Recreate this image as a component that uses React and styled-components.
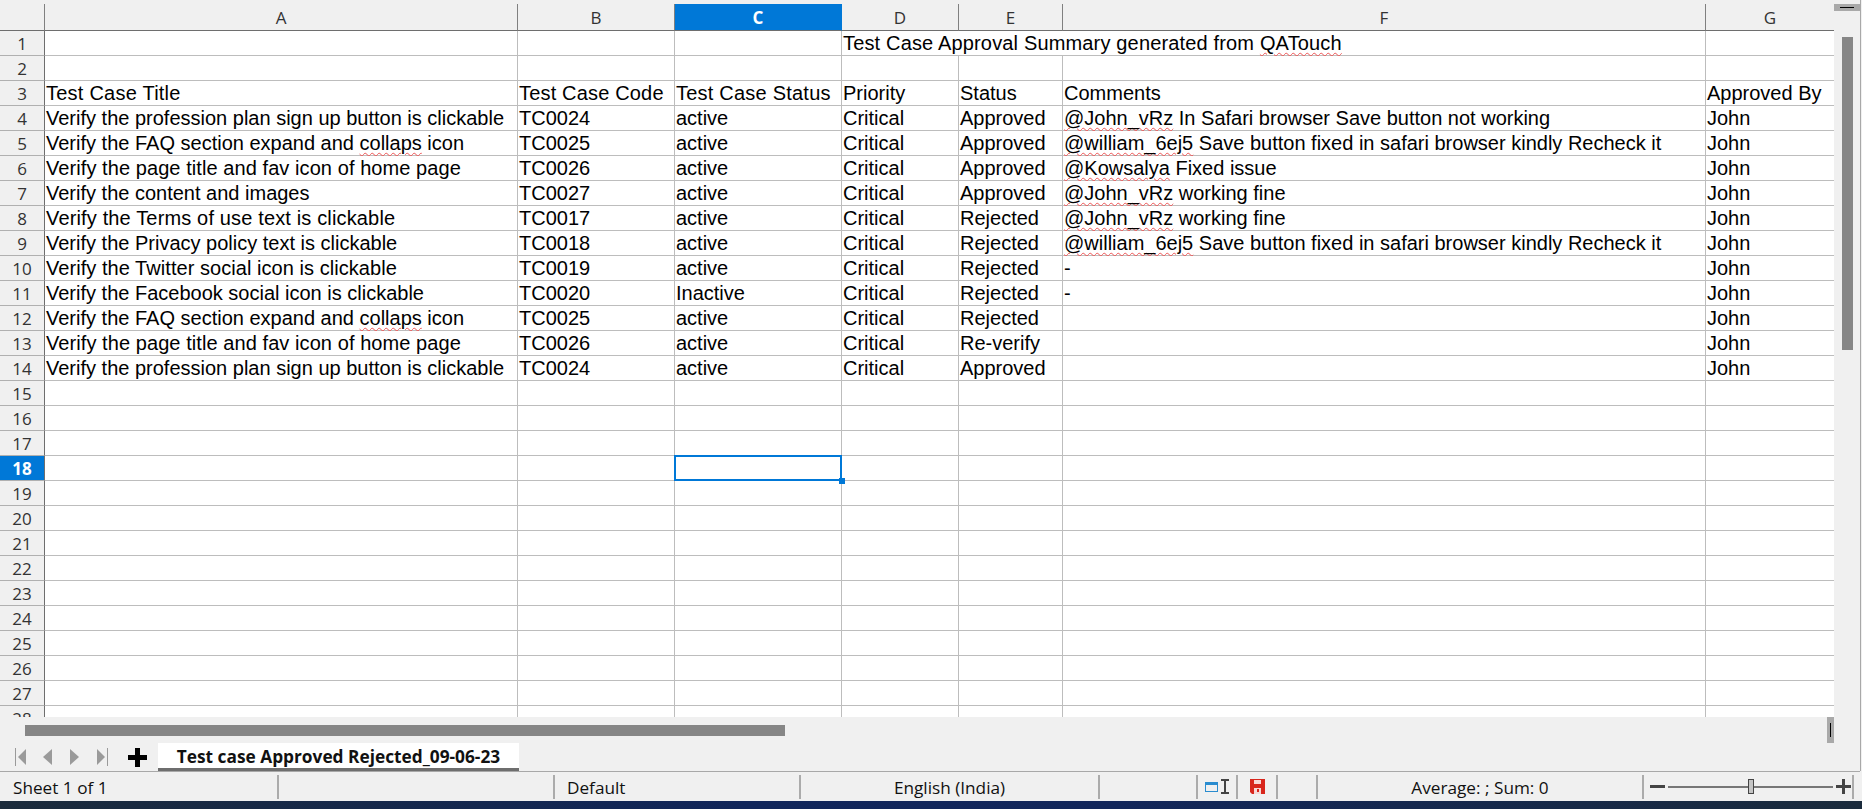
import React from 'react'
import styled, { createGlobalStyle } from 'styled-components'

const GlobalStyle = createGlobalStyle`
    html, body {
        margin: 0;
        padding: 0;
        background: #f0f0f0;
        overflow: hidden;
    }
`;

const UI_FONT = `"Open Sans", "Noto Sans", sans-serif`;
const COLUMNS = '45px 473px 157px 167px 117px 104px 643px 128px';

const Page = styled.div`
    width: 1862px;
    height: 809px;
    display: flex;
    flex-direction: column;
    background: #f0f0f0;
    overflow: hidden;
`;

const Upper = styled.div`
    width: 1860px;
    height: 771px;
    display: flex;
    flex-direction: column;
    border-right: 1px solid #a8a8a8;
    flex-shrink: 0;
`;

const Main = styled.div`
    height: 717px;
    display: flex;
    flex-shrink: 0;
`;

const Sheet = styled.div`
    width: 1834px;
    padding-top: 4px;
    box-sizing: border-box;
    overflow: hidden;
`;

const Row = styled.div`
    display: grid;
    grid-template-columns: ${COLUMNS};
    height: ${p => (p.$head ? '27px' : '25px')};
`;

const Corner = styled.div`
    background: #f0f0f0;
    border-bottom: 1px solid #6e6e6e;
    border-right: 1px solid #808080;
`;

const ColHead = styled.div`
    display: flex;
    align-items: center;
    justify-content: center;
    font-family: ${UI_FONT};
    font-size: 17px;
    font-weight: ${p => (p.$active ? 700 : 400)};
    color: ${p => (p.$active ? '#ffffff' : '#333333')};
    background: ${p => (p.$active ? '#0078d7' : '#f0f0f0')};
    border-bottom: 1px solid #6e6e6e;
    border-right: 1px solid ${p => (p.$active ? '#0078d7' : '#808080')};
    box-sizing: border-box;
    &:last-child { border-right: none; }
`;

const RowHead = styled.div`
    display: flex;
    align-items: center;
    justify-content: center;
    font-family: ${UI_FONT};
    font-size: 17px;
    font-weight: ${p => (p.$active ? 700 : 400)};
    color: ${p => (p.$active ? '#ffffff' : '#333333')};
    background: ${p => (p.$active ? '#0078d7' : '#f0f0f0')};
    border-bottom: 1px solid #b0b0b0;
    border-right: 1px solid #6e6e6e;
    box-sizing: border-box;
`;

const Cell = styled.div`
    position: relative;
    grid-column: span ${p => p.$span || 1};
    background: #ffffff;
    border-bottom: 1px solid #bdbdbd;
    border-right: 1px solid #bdbdbd;
    box-sizing: border-box;
    padding-left: 1px;
    font-family: "Liberation Sans", Arial, sans-serif;
    font-size: 20px;
    line-height: 24px;
    color: #000000;
    white-space: nowrap;
    &:last-child { border-right: none; }
`;

const SelectedFrame = styled.div`
    position: absolute;
    z-index: 2;
    left: -1px;
    top: -1px;
    width: 168px;
    height: 26px;
    box-sizing: border-box;
    border: 2px solid #0078d7;
    &::after {
        content: '';
        position: absolute;
        right: -5px;
        bottom: -5px;
        width: 6px;
        height: 6px;
        background: #0078d7;
    }
`;

const Misspelt = styled.span`
    text-decoration: underline wavy #ee5555;
    text-decoration-thickness: 1px;
    text-underline-offset: 2px;
`;

// the reference's hinted glyphs run a little wider on some strings
const Wide = styled.span`
    letter-spacing: ${p => p.$by}px;
`;

const VScroll = styled.div`
    width: 26px;
    display: flex;
    flex-direction: column;
    align-items: center;
    padding-top: 4px;
    box-sizing: border-box;
`;

const VHandle = styled.div`
    width: 26px;
    height: 7px;
    background: #a9a9a9;
    display: flex;
    align-items: center;
    justify-content: center;
    &::before {
        content: '';
        width: 14px;
        height: 1px;
        background: #000000;
    }
`;

const VThumb = styled.div`
    width: 11px;
    height: 313px;
    margin-top: 26px;
    background: #868686;
`;

const HScroll = styled.div`
    height: 26px;
    display: flex;
    padding-right: 26px;
    flex-shrink: 0;
`;

const HTrack = styled.div`
    flex: 1;
    padding: 8px 0 0 25px;
`;

const HThumb = styled.div`
    width: 760px;
    height: 11px;
    background: #868686;
`;

const HHandle = styled.div`
    width: 7px;
    background: #a9a9a9;
    display: flex;
    align-items: center;
    justify-content: center;
    &::before {
        content: '';
        width: 1px;
        height: 14px;
        background: #000000;
    }
`;

const TabBar = styled.div`
    height: 28px;
    display: flex;
    align-items: stretch;
    padding-left: 7px;
    flex-shrink: 0;
`;

const NavButton = styled.div`
    width: 27px;
    display: flex;
    align-items: center;
    justify-content: center;
    color: #9a9a9a;
`;

const AddButton = styled(NavButton)`
    color: #000000;
    margin: 0 7px 0 9px;
`;

const Tab = styled.div`
    width: 361px;
    box-sizing: border-box;
    background: #ffffff;
    border-bottom: 3px solid #6e6e6e;
    padding-top: 1px;
    display: flex;
    align-items: center;
    justify-content: center;
    font-family: ${UI_FONT};
    font-size: 17.3px;
    font-weight: 700;
    color: #111111;
`;

const StatusBar = styled.div`
    height: 30px;
    width: 1860px;
    border-top: 1px solid #a8a8a8;
    box-sizing: border-box;
    display: flex;
    align-items: center;
    flex-shrink: 0;
    font-family: ${UI_FONT};
    font-size: 17.2px;
    color: #111111;
`;

const StatusCell = styled.div`
    width: ${p => p.$w}px;
    height: 24px;
    box-sizing: border-box;
    display: flex;
    align-items: center;
    justify-content: ${p => (p.$left ? 'flex-start' : 'center')};
    padding-left: ${p => p.$left || 0}px;
    gap: 3px;
    border-right: 2px solid #ababab;
    white-space: nowrap;
`;

const StatusText = styled.span`
    position: relative;
    top: 1px;
`;

const ZoomTrack = styled.div`
    position: relative;
    width: 165px;
    height: 2px;
    background: #777777;
`;

const ZoomThumb = styled.div`
    position: absolute;
    left: 80px;
    top: -7px;
    width: 6px;
    height: 15px;
    box-sizing: border-box;
    background: #c4c4c4;
    border: 1px solid #444444;
`;

const Taskbar = styled.div`
    flex: 1;
    background: linear-gradient(90deg, #1b2b3b 0%, #10255a 40%, #12265a 60%, #1a2b3c 100%);
`;

const First = () => (
    <svg width="12" height="18" viewBox="0 0 12 18"><path d="M0.5 0v18" stroke="currentColor" /><path d="M11 1v16L3 9z" fill="currentColor" /></svg>
)
const Prev = () => (
    <svg width="9" height="18" viewBox="0 0 9 18"><path d="M9 1v16L0 9z" fill="currentColor" /></svg>
)
const Next = () => (
    <svg width="9" height="18" viewBox="0 0 9 18"><path d="M0 1v16l9-8z" fill="currentColor" /></svg>
)
const Last = () => (
    <svg width="12" height="18" viewBox="0 0 12 18"><path d="M11.5 0v18" stroke="currentColor" /><path d="M1 1v16l8-8z" fill="currentColor" /></svg>
)
const Plus = () => (
    <svg width="19" height="19" viewBox="0 0 19 19"><path d="M7 0h5v7h7v5h-7v7H7v-7H0V7h7z" fill="currentColor" /></svg>
)
const InsertMode = () => (
    <>
        <svg width="13" height="10" viewBox="0 0 13 10">
            <rect x="0.5" y="0.5" width="12" height="9" fill="none" stroke="#2a8ccf" />
            <rect x="0" y="0" width="13" height="3" fill="#2a8ccf" />
        </svg>
        <svg width="8" height="15" viewBox="0 0 8 15"><path d="M0 1h8M0 14h8M4 1v13" fill="none" stroke="#444" strokeWidth="2" /></svg>
    </>
)
const SaveIcon = () => (
    <svg width="15" height="15" viewBox="0 0 15 15">
        <path d="M0 0h15v15H2l-2-2z" fill="#d8261c" />
        <rect x="4" y="1" width="7" height="4" fill="#f6d8d6" />
        <rect x="4" y="9" width="7" height="6" fill="#f6d8d6" />
        <rect x="7" y="10" width="2" height="3" fill="#d8261c" />
    </svg>
)
const ZoomMinus = () => (
    <svg width="15" height="3" viewBox="0 0 15 3"><rect width="15" height="3" fill="#444" /></svg>
)
const ZoomPlus = () => (
    <svg width="15" height="15" viewBox="0 0 15 15"><path d="M6 0h3v6h6v3H9v6H6V9H0V6h6z" fill="#444" /></svg>
)

const LETTERS = ['A', 'B', 'C', 'D', 'E', 'F', 'G']

const profession = 'Verify the profession plan sign up button is clickable'
const faq = <>Verify the FAQ section expand and <Misspelt>collaps</Misspelt> icon</>
const fav = <Wide $by={0.075}>Verify the page title and fav icon of home page</Wide>
const fixedIt = <><Misspelt>@william_6ej5</Misspelt> Save button fixed in safari browser kindly Recheck it</>
const fine = <><Misspelt>@John_vRz</Misspelt> working fine</>

const DATA = {
    3: [<Wide $by={0.23}>Test Case Title</Wide>, <Wide $by={0.17}>Test Case Code</Wide>, <Wide $by={0.22}>Test Case Status</Wide>, 'Priority', 'Status', 'Comments', 'Approved By'],
    4: [profession, 'TC0024', 'active', 'Critical', 'Approved', <><Misspelt>@John_vRz</Misspelt> In Safari browser Save button not working</>, 'John'],
    5: [faq, 'TC0025', 'active', 'Critical', 'Approved', fixedIt, 'John'],
    6: [fav, 'TC0026', 'active', 'Critical', 'Approved', <><Misspelt>@Kowsalya</Misspelt> Fixed issue</>, 'John'],
    7: ['Verify the content and images', 'TC0027', 'active', 'Critical', 'Approved', fine, 'John'],
    8: [<Wide $by={0.15}>Verify the Terms of use text is clickable</Wide>, 'TC0017', 'active', 'Critical', 'Rejected', fine, 'John'],
    9: ['Verify the Privacy policy text is clickable', 'TC0018', 'active', 'Critical', 'Rejected', fixedIt, 'John'],
    10: [<Wide $by={0.05}>Verify the Twitter social icon is clickable</Wide>, 'TC0019', 'active', 'Critical', 'Rejected', '-', 'John'],
    11: ['Verify the Facebook social icon is clickable', 'TC0020', 'Inactive', 'Critical', 'Rejected', '-', 'John'],
    12: [faq, 'TC0025', 'active', 'Critical', 'Rejected', '', 'John'],
    13: [fav, 'TC0026', 'active', 'Critical', 'Re-verify', '', 'John'],
    14: [profession, 'TC0024', 'active', 'Critical', 'Approved', '', 'John'],
}

const ROW_NUMBERS = Array.from({ length: 28 }, (_, i) => i + 1)

function SheetRow({ number }) {
    if (number === 1) {
        return (
            <Row>
                <RowHead>1</RowHead>
                <Cell /><Cell /><Cell />
                <Cell $span={3}>
                    <Wide $by={0.16}>Test Case Approval Summary generated from <Misspelt>QATouch</Misspelt></Wide>
                </Cell>
                <Cell />
            </Row>
        )
    }
    const values = DATA[number] || LETTERS.map(() => '')
    return (
        <Row>
            <RowHead $active={number === 18}>{number}</RowHead>
            {values.map((value, i) => (
                <Cell key={i}>
                    {value}
                    {number === 18 && i === 2 && <SelectedFrame />}
                </Cell>
            ))}
        </Row>
    )
}

export default function App() {
    return (
        <Page>
            <GlobalStyle />
            <Upper>
                <Main>
                    <Sheet>
                        <Row $head>
                            <Corner />
                            {LETTERS.map(letter => (
                                <ColHead key={letter} $active={letter === 'C'}>{letter}</ColHead>
                            ))}
                        </Row>
                        {ROW_NUMBERS.map(number => <SheetRow key={number} number={number} />)}
                    </Sheet>
                    <VScroll>
                        <VHandle />
                        <VThumb />
                    </VScroll>
                </Main>
                <HScroll>
                    <HTrack><HThumb /></HTrack>
                    <HHandle />
                </HScroll>
                <TabBar>
                    <NavButton><First /></NavButton>
                    <NavButton><Prev /></NavButton>
                    <NavButton><Next /></NavButton>
                    <NavButton><Last /></NavButton>
                    <AddButton><Plus /></AddButton>
                    <Tab>Test case Approved Rejected_09-06-23</Tab>
                </TabBar>
            </Upper>
            <StatusBar>
                <StatusCell $w={279} $left={13}><StatusText>Sheet 1 of 1</StatusText></StatusCell>
                <StatusCell $w={276} />
                <StatusCell $w={246} $left={12}><StatusText>Default</StatusText></StatusCell>
                <StatusCell $w={299}><StatusText>English (India)</StatusText></StatusCell>
                <StatusCell $w={98} />
                <StatusCell $w={40}><InsertMode /></StatusCell>
                <StatusCell $w={40}><SaveIcon /></StatusCell>
                <StatusCell $w={40} />
                <StatusCell $w={326}><StatusText>Average: ; Sum: 0</StatusText></StatusCell>
                <StatusCell $w={210} $left={6}>
                    <ZoomMinus />
                    <ZoomTrack><ZoomThumb /></ZoomTrack>
                    <ZoomPlus />
                </StatusCell>
            </StatusBar>
            <Taskbar />
        </Page>
    )
}
